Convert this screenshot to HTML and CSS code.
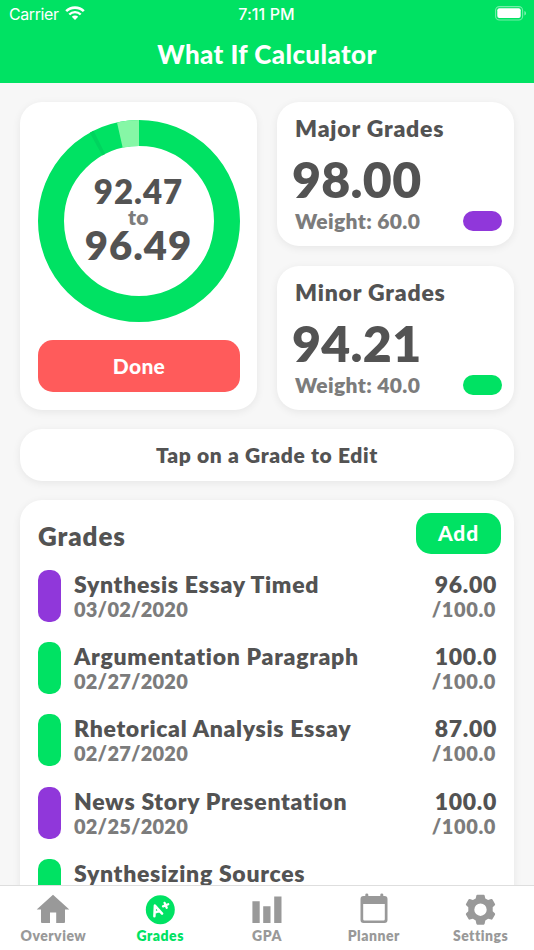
FILE: index.html
```html
<!DOCTYPE html>
<html lang="en">
<head>
    <meta charset="UTF-8">
    <meta name="viewport" content="width=device-width, initial-scale=1.0">
    <title>What If Calculator</title>
    <link rel="stylesheet" href="styles.css">
</head>
<body>

    <!-- Header -->
    <header>
        <div class="status-bar">
            <div class="carrier">
                <span>Carrier</span>
                <svg width="20" height="14" viewBox="0 0 20 14">
                    <path d="M1.2 5.2a12.5 12.5 0 0 1 17.6 0" fill="none" stroke="#fff" stroke-width="2.6"/>
                    <path d="M4.3 8.5a8 8 0 0 1 11.4 0" fill="none" stroke="#fff" stroke-width="2.4"/>
                    <path d="M10 14 6.8 10.8a4.6 4.6 0 0 1 6.4 0z" fill="#fff"/>
                </svg>
            </div>
            <div class="time">7:11 PM</div>
            <svg class="battery" width="32" height="15" viewBox="0 0 32 15">
                <rect x=".6" y=".6" width="27" height="13.4" rx="3.8" fill="none" stroke="#fff" stroke-opacity=".45" stroke-width="1.1"/>
                <rect x="2.3" y="2.3" width="23.4" height="9.8" rx="2" fill="#fff"/>
                <path d="M29.4 5v4.6q1.6-.6 1.6-2.3T29.4 5z" fill="#fff" fill-opacity=".5"/>
            </svg>
        </div>
        <h1>What If Calculator</h1>
    </header>

    <main>
        <!-- Result ring and category weights -->
        <div class="summary">
            <div class="card result">
                <div class="ring">
                    <svg class="ring-chart" width="202" height="202" viewBox="-101 -101 202 202">
                        <circle r="88" fill="none" stroke="#00e263" stroke-width="26"/>
                        <path d="M0-101V-75A75 75 0 0 0-16.3-73.2L-22-98.6A101 101 0 0 1 0-101z" fill="#86f7a6"/>
                        <path d="M-49.2-88.2-36.7-65.4-33.8-66.9-45.4-90.2A101 101 0 0 0-49.2-88.2z" fill="#00d45f"/>
                    </svg>
                    <div class="low">92.47</div>
                    <div class="to">to</div>
                    <div class="high">96.49</div>
                </div>
                <button class="done">Done</button>
            </div>
            <div class="categories">
                <div class="card category">
                    <h2>Major Grades</h2>
                    <div class="score">98.00</div>
                    <div class="weight"><span>Weight: 60.0</span><i class="tag purple"></i></div>
                </div>
                <div class="card category">
                    <h2>Minor Grades</h2>
                    <div class="score">94.21</div>
                    <div class="weight"><span>Weight: 40.0</span><i class="tag green"></i></div>
                </div>
            </div>
        </div>

        <div class="card hint">Tap on a Grade to Edit</div>

        <!-- Grade list -->
        <div class="card grades">
            <div class="grades-top">
                <h2>Grades</h2>
                <button class="add">Add</button>
            </div>
            <div class="grade">
                <i class="bar purple"></i>
                <div class="info"><div class="name">Synthesis Essay Timed</div><div class="date">03/02/2020</div></div>
                <div class="points"><div class="got">96.00</div><div class="total">/100.0</div></div>
            </div>
            <div class="grade">
                <i class="bar green"></i>
                <div class="info"><div class="name">Argumentation Paragraph</div><div class="date">02/27/2020</div></div>
                <div class="points"><div class="got">100.0</div><div class="total">/100.0</div></div>
            </div>
            <div class="grade">
                <i class="bar green"></i>
                <div class="info"><div class="name">Rhetorical Analysis Essay</div><div class="date">02/27/2020</div></div>
                <div class="points"><div class="got">87.00</div><div class="total">/100.0</div></div>
            </div>
            <div class="grade">
                <i class="bar purple"></i>
                <div class="info"><div class="name">News Story Presentation</div><div class="date">02/25/2020</div></div>
                <div class="points"><div class="got">100.0</div><div class="total">/100.0</div></div>
            </div>
            <div class="grade">
                <i class="bar green"></i>
                <div class="info"><div class="name">Synthesizing Sources</div></div>
            </div>
        </div>
    </main>

    <!-- Tab bar -->
    <nav>
        <a class="tab">
            <svg width="34" height="32" viewBox="0 0 34 32">
                <path d="M17 .7 33.3 15.5H29V28q0 1-1 1H20.2V18.5H14V29H6q-1 0-1-1V15.5H.7z" fill="#999"/>
            </svg>
            <span>Overview</span>
        </a>
        <a class="tab active">
            <svg width="34" height="32" viewBox="0 0 34 32">
                <circle cx="17.3" cy="15.7" r="14.5" fill="#00e263"/>
                <g fill="none" stroke="#fff" stroke-linecap="round" stroke-linejoin="round">
                    <path d="M11.4 22.2 11.9 11.6 19.1 19.6M11.8 18.6 16.4 16.8" stroke-width="2.5"/>
                    <path d="M20 12.4 25.2 10.3M21.6 8.9 23.7 13.8" stroke-width="2.3"/>
                </g>
            </svg>
            <span>Grades</span>
        </a>
        <a class="tab">
            <svg width="34" height="32" viewBox="0 0 34 32">
                <path d="M2.4 7.3h7.3V29H2.4zM13.2 12.3h7.3V29h-7.3zM24.2 2.5h7.3V29h-7.3z" fill="#999"/>
            </svg>
            <span>GPA</span>
        </a>
        <a class="tab">
            <svg width="34" height="32" viewBox="0 0 34 32">
                <path d="M8.3 2V.7q0-1.2 1.5-1.2t1.5 1.2V2h12V.7q0-1.2 1.5-1.2t1.5 1.2V2H27.500q3 0 3 3V26q0 3-3 3H6.500q-3 0-3-3V5q0-3 3-3zM6.200 9.900V25.300q0 1.200 1.200 1.200H26.600q1.200 0 1.200-1.200V9.900z" fill="#999" fill-rule="evenodd"/>
            </svg>
            <span>Planner</span>
        </a>
        <a class="tab">
            <svg width="34" height="32" viewBox="-16.500 -15.700 34 32">
                <path d="M-3.200-15H3.200Q4-15 4.200-14L4.800-11.200 7.600-9.600 10.700-10.700Q11.500-11 12-10.200L14.500-5.800Q14.900-5 14.300-4.500L12.200-2.500V1.500L14.300 3.500Q14.900 4.200 14.500 5L12 9.300Q11.500 10.200 10.700 9.900L7.600 9 4.800 10.700 4.200 13.900Q4 15 3.200 15H-3.200Q-4 15-4.200 13.900L-4.800 10.700-7.600 9-10.700 9.900Q-11.500 10.200-12 9.300L-14.500 5Q-14.900 4.200-14.300 3.500L-12.200 1.500V-2.500L-14.300-4.500Q-14.900-5-14.500-5.800L-12-10.200Q-11.500-11-10.700-10.700L-7.600-9.600-4.800-11.200-4.200-14Q-4-15-3.200-15zM0-6.200A6.200 6.200 0 1 0 0 6.200 6.200 6.200 0 1 0 0-6.200z" fill="#999" fill-rule="evenodd"/>
            </svg>
            <span>Settings</span>
        </a>
    </nav>

</body>
</html>
```
FILE: styles.css
```css
* {
    box-sizing: border-box;
}

body {
    font-family: Lato, "Liberation Sans", sans-serif;
    font-weight: 800;
    margin: 0;
    height: 950px;
    display: flex;
    flex-direction: column;
    overflow: hidden;
    background-color: #f7f7f7;
    color: #535353;
    white-space: nowrap;
}

h1, h2 {
    margin: 0;
    font-weight: inherit;
}

svg {
    display: block;
    flex-shrink: 0;
    overflow: visible;
}

button {
    border: 0;
    padding: 0 0 2px;
    font: inherit;
    color: white;
}

.purple {
    background-color: #9037da;
}

.green {
    background-color: #00e263;
}

header {
    height: 83px;
    flex-shrink: 0;
    background-color: #00e263;
    color: white;
}

.status-bar {
    height: 28px;
    display: grid;
    grid-template-columns: 1fr auto 1fr;
    align-items: center;
    padding: 0 7px 0 9px;
    font: 400 16px/28px Inter, sans-serif;
}

.carrier {
    display: flex;
    align-items: center;
    gap: 6px;
    letter-spacing: -0.4px;
}

.carrier svg {
    margin-top: -2px;
}

.time {
    margin-left: -3px;
    font-weight: 500;
    letter-spacing: 0.1px;
}

.battery {
    justify-self: end;
    margin-top: -1px;
}

h1 {
    font-size: 26px;
    line-height: 53px;
    font-weight: 900;
    letter-spacing: 0.4px;
    text-align: center;
}

main {
    flex: 1;
    min-height: 0;
    overflow: hidden;
    padding: 19px 20px 0;
}

.card {
    background-color: white;
    border-radius: 22px;
    box-shadow: 0 2px 8px rgba(0, 0, 0, 0.07);
}

.summary {
    display: grid;
    grid-template-columns: 237px 237px;
    gap: 20px;
}

.result {
    height: 308px;
    padding: 18px;
}

.ring {
    position: relative;
    height: 202px;
    padding-top: 54px;
    text-align: center;
}

.ring-chart {
    position: absolute;
    top: 0;
    left: 0;
}

.ring div {
    position: relative;
}

.low {
    font-size: 33px;
    line-height: 34px;
    letter-spacing: 1px;
}

.to {
    font-size: 21px;
    line-height: 17px;
    letter-spacing: 0.4px;
    color: #7c7c7c;
}

.high {
    font-size: 40px;
    line-height: 40px;
    letter-spacing: 1px;
}

.done {
    display: block;
    width: 202px;
    height: 52px;
    margin-top: 18px;
    border-radius: 15px;
    background-color: #ff5b5b;
    font-size: 21px;
    font-weight: 900;
    letter-spacing: 0.3px;
}

.categories {
    display: flex;
    flex-direction: column;
    gap: 20px;
}

.category {
    height: 144px;
    padding: 12px 12px 0 18px;
}

.category h2 {
    font-size: 23px;
    line-height: 28px;
    letter-spacing: 0.8px;
}

.score {
    margin-left: -3px;
    margin-top: 7px;
    font-size: 50px;
    line-height: 60px;
    letter-spacing: 0.3px;
}

.weight {
    display: flex;
    justify-content: space-between;
    align-items: center;
    height: 24px;
    font-size: 21px;
    line-height: 22px;
    letter-spacing: 0.35px;
    color: #7c7c7c;
}

.tag {
    width: 39px;
    height: 20px;
    border-radius: 10px;
}

.hint {
    height: 52px;
    margin-top: 19px;
    font-size: 21px;
    line-height: 51px;
    letter-spacing: 0.65px;
    text-align: center;
}

.grades {
    height: 440px;
    margin-top: 19px;
    padding: 13px 13px 0 18px;
}

.grades-top {
    display: flex;
    justify-content: space-between;
    height: 41px;
    margin-bottom: 16px;
}

.grades-top h2 {
    font-size: 26px;
    line-height: 46px;
    letter-spacing: 0.9px;
}

.add {
    width: 85px;
    height: 41px;
    border-radius: 15px;
    background-color: #00e263;
    font-size: 21px;
    font-weight: 900;
    letter-spacing: 0.9px;
}

.grade {
    display: flex;
    height: 52px;
    margin-bottom: 20.2px;
    padding-right: 4px;
}

.bar {
    width: 23px;
    height: 52px;
    margin-right: 13px;
    border-radius: 10px;
}

.info {
    flex: 1;
}

.name, .got {
    font-size: 23px;
    line-height: 28px;
    letter-spacing: 0.7px;
}

.date, .total {
    font-size: 20px;
    line-height: 22px;
    letter-spacing: 0.2px;
    color: #7c7c7c;
}

.points {
    text-align: right;
}

.total {
    margin-right: 1px;
    letter-spacing: 0.6px;
}

nav {
    height: 65px;
    flex-shrink: 0;
    display: grid;
    grid-template-columns: repeat(5, 1fr);
    border-top: 1px solid #dedede;
    background-color: white;
}

.tab {
    display: flex;
    flex-direction: column;
    align-items: center;
    padding-top: 8px;
    font-size: 14px;
    line-height: 20px;
    letter-spacing: 0.5px;
    color: #999;
}

.active {
    color: #00e263;
}
```
